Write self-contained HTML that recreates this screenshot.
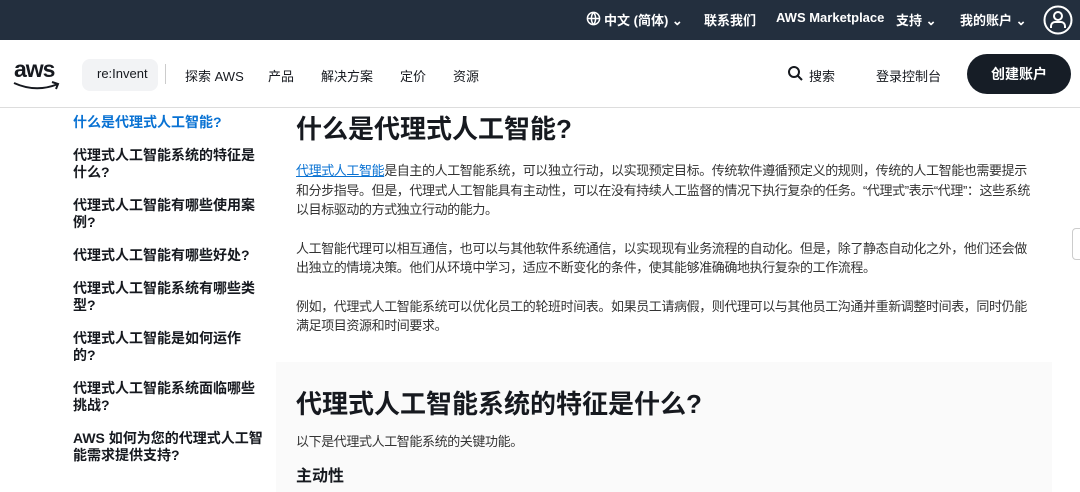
<!DOCTYPE html><html><head><meta charset="utf-8"><style>
*{margin:0;padding:0;box-sizing:border-box}
body{width:1080px;height:488px;overflow:hidden;background:#fff;font-family:"Liberation Sans","Noto Sans CJK SC",sans-serif;color:#16191f;position:relative}
.top{position:absolute;left:0;top:0;width:1080px;height:40px;background:#232f3e;color:#fff;font-size:13px;font-weight:bold}
.top span{position:absolute;top:10px}
.nav{position:absolute;top:40px;left:0;width:1080px;height:68px;border-bottom:1px solid #ddd;font-size:13px}
.nav span{position:absolute;top:26px;color:#16191f}
.side{position:absolute;left:73px;top:114px;width:220px;font-size:14px;font-weight:bold;line-height:17px;white-space:nowrap}
.side div{margin-bottom:16px}
.main{position:absolute;left:296px;top:107px;width:780px;font-size:13px;line-height:19.5px;color:#333;white-space:nowrap}
.main p{letter-spacing:-0.4px}
h1{font-size:26px;line-height:40px;color:#16191f;margin-top:2px;margin-bottom:12px}
p{margin-bottom:19px}
.box{position:absolute;left:276px;top:362px;width:776px;height:130px;background:#fafafa}
</style></head><body>
<div class="top">
<svg style="position:absolute;left:586px;top:11px" width="15" height="15" viewBox="0 0 16 16" fill="none" stroke="#fff" stroke-width="1.6"><circle cx="8" cy="8" r="6.5"/><path d="M1.5 8h13M8 1.5c-3 3.5-3 9.5 0 13M8 1.5c3 3.5 3 9.5 0 13"/></svg>
<span style="left:604px">中文 (简体) ⌄</span>
<span style="left:704px">联系我们</span>
<span style="left:776px">AWS Marketplace</span>
<span style="left:896px">支持 ⌄</span>
<span style="left:960px">我的账户 ⌄</span>
<svg style="position:absolute;left:1043px;top:5px" width="30" height="30" viewBox="0 0 30 30" fill="none" stroke="#fff" stroke-width="2"><circle cx="15" cy="15" r="13.5"/><circle cx="15" cy="11" r="4"/><path d="M8 23v-2a4 4 0 0 1 4-4h6a4 4 0 0 1 4 4v2"/></svg>
</div>
<div class="nav">
<div style="position:absolute;left:14px;top:16px;font-size:23px;font-weight:bold;letter-spacing:-1px;color:#16191f">aws</div>
<svg style="position:absolute;left:12px;top:41px" width="50" height="10" viewBox="0 0 50 10" fill="none" stroke="#16191f" stroke-width="2"><path d="M2 2q22 10 44 1M40 1l6 2-2 5"/></svg>
<div style="position:absolute;left:82px;top:19px;width:76px;height:32px;background:#f2f3f5;border-radius:8px"></div>
<span style="left:97px">re:Invent</span>
<div style="position:absolute;left:165px;top:24px;width:1px;height:20px;background:#ccc"></div>
<span style="left:185px">探索 AWS</span>
<span style="left:268px">产品</span>
<span style="left:321px">解决方案</span>
<span style="left:400px">定价</span>
<span style="left:453px">资源</span>
<svg style="position:absolute;left:787px;top:25px" width="16" height="16" viewBox="0 0 16 16" fill="none" stroke="#16191f" stroke-width="2"><circle cx="7" cy="7" r="5"/><path d="M11 11l4 4"/></svg>
<span style="left:809px">搜索</span>
<span style="left:876px">登录控制台</span>
<div style="position:absolute;left:967px;top:14px;width:104px;height:40px;background:#161d26;border-radius:20px;color:#fff;font-weight:bold;font-size:14px;text-align:center;line-height:40px">创建账户</div>
</div>
<div class="side">
<div style="color:#0972d3">什么是代理式人工智能?</div>
<div>代理式人工智能系统的特征是<br>什么?</div>
<div>代理式人工智能有哪些使用案<br>例?</div>
<div>代理式人工智能有哪些好处?</div>
<div>代理式人工智能系统有哪些类<br>型?</div>
<div>代理式人工智能是如何运作<br>的?</div>
<div>代理式人工智能系统面临哪些<br>挑战?</div>
<div>AWS 如何为您的代理式人工智<br>能需求提供支持?</div>
</div>
<div class="box"></div>
<div style="position:absolute;left:1072px;top:228px;width:12px;height:32px;border:1px solid #ccc;border-radius:4px;background:#fff"></div>
<div class="main">
<h1>什么是代理式人工智能?</h1>
<p><span style="color:#0972d3;text-decoration:underline">代理式人工智能</span>是自主的人工智能系统，可以独立行动，以实现预定目标。传统软件遵循预定义的规则，传统的人工智能也需要提示<br>和分步指导。但是，代理式人工智能具有主动性，可以在没有持续人工监督的情况下执行复杂的任务。“代理式”表示“代理”：这些系统<br>以目标驱动的方式独立行动的能力。</p>
<p>人工智能代理可以相互通信，也可以与其他软件系统通信，以实现现有业务流程的自动化。但是，除了静态自动化之外，他们还会做<br>出独立的情境决策。他们从环境中学习，适应不断变化的条件，使其能够准确确地执行复杂的工作流程。</p>
<p>例如，代理式人工智能系统可以优化员工的轮班时间表。如果员工请病假，则代理可以与其他员工沟通并重新调整时间表，同时仍能<br>满足项目资源和时间要求。</p>
<h1 style="margin-top:48px;margin-bottom:8px">代理式人工智能系统的特征是什么?</h1>
<p style="margin-bottom:16px">以下是代理式人工智能系统的关键功能。</p>
<div style="font-size:16px;font-weight:bold;color:#16191f">主动性</div>
</div>
</body></html>
